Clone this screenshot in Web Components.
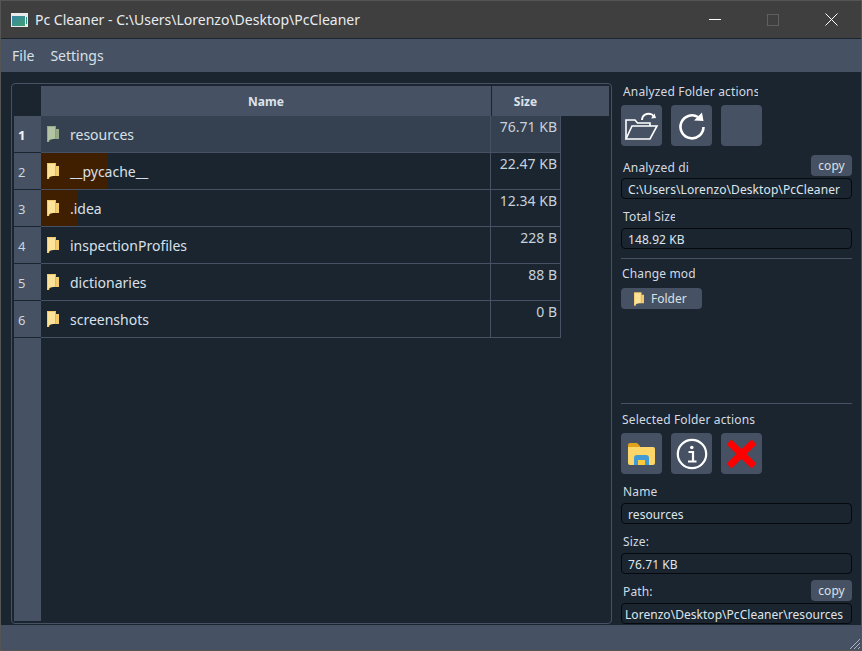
<!DOCTYPE html>
<html lang="en">
<head>
<meta charset="utf-8">
<title>Pc Cleaner</title>
<style>
  html, body { margin: 0; height: 100%; background: #1a2530; }
  body { font: 14px "Noto Sans", sans-serif; color: #d9e0e8; overflow: hidden; }
</style>
</head>
<body>
<pc-app></pc-app>

<script>
// ---------------------------------------------------------------------------
// Helpers
// ---------------------------------------------------------------------------

const define = (tag, markup) => {
  const template = document.createElement('template');
  template.innerHTML = markup;
  customElements.define(tag, class extends HTMLElement {
    constructor() {
      super();
      this.attachShadow({ mode: 'open' }).append(template.content.cloneNode(true));
    }
  });
};

const folderSvg = (light, mid, dark) => `
  <svg width="100%" height="100%" viewBox="0 0 12 16" style="display:block">
    <path d="M0 0 H9 V3 H12 V13 H3 L2 16 H0 Z" fill="${mid}"/>
    <path d="M1 1 H8 V12.500 L2 14 L1 15 Z" fill="${light}"/>
    <path d="M8.500 1 H9 V13 H8.500 Z" fill="${dark}"/>
  </svg>`;

// ---------------------------------------------------------------------------
// Small pieces
// ---------------------------------------------------------------------------

define('pc-icon-button', `
  <style>
    :host { display: flex; align-items: center; justify-content: center;
            width: 41px; height: 41px; background: #465263; border-radius: 4px; }
  </style>
  <slot></slot>`);

define('pc-copy-button', `
  <style>
    :host { display: flex; align-items: center; justify-content: center;
            width: 41px; height: 21px; background: #465263; border-radius: 4px;
            font-size: 12px; color: #d9e0e8; }
  </style>
  <slot></slot>`);

define('pc-value', `
  <style>
    :host { display: flex; align-items: center; box-sizing: border-box; height: 21px;
            padding: 2px 6px 0; background: #1a2530; border: 1px solid #05080c; border-radius: 4px;
            font-size: 12px; letter-spacing: .09px; color: #dfe5ec; white-space: nowrap; overflow: hidden; }
  </style>
  <slot></slot>`);

define('pc-label', `
  <style>
    :host { display: block; height: 16px; line-height: 18px; font-size: 12px; letter-spacing: .15px;
            padding-left: 2px; color: #d3dae2; white-space: nowrap; overflow: hidden; }
  </style>
  <slot></slot>`);

define('pc-rule', `
  <style>
    :host { display: block; height: 1px; background: #465263; }
  </style>`);

// ---------------------------------------------------------------------------
// Window chrome
// ---------------------------------------------------------------------------

define('pc-titlebar', `
  <style>
    :host { display: flex; align-items: center; height: 37px; background: #3f3f3f;
            border-bottom: 1px solid #1a2530; }
    .icon { margin-left: 10px; width: 17px; height: 14px; }
    .title { margin-left: 7px; font-size: 14px; color: #e8ecf0; white-space: nowrap; flex: 1; }
    .control { width: 58px; height: 37px; display: flex; align-items: center; justify-content: center; }
    .control:last-child { width: 59px; }
    .controls { display: flex; }
  </style>
  <svg class="icon" viewBox="0 0 17 14">
    <defs><linearGradient id="g" x1="0" y1="0" x2="1" y2="1">
      <stop offset="0" stop-color="#3a86a8"/><stop offset="1" stop-color="#3f9f70"/>
    </linearGradient></defs>
    <rect width="17" height="14" fill="#e8ecec"/>
    <rect x="1" y="3" width="13" height="10" fill="url(#g)"/>
    <rect x="15" y="4" width="1" height="7" fill="#2f8f8a"/>
  </svg>
  <span class="title">Pc Cleaner - C:\\Users\\Lorenzo\\Desktop\\PcCleaner</span>
  <div class="controls">
    <div class="control"><svg width="12" height="12"><rect y="5" width="12" height="1" fill="#fff"/></svg></div>
    <div class="control"><svg width="12" height="12"><rect x=".5" y=".5" width="11" height="11" fill="none" stroke="#5f5f5f"/></svg></div>
    <div class="control"><svg width="13" height="13"><path d="M.5 .5 L12.5 12.5 M12.5 .5 L.5 12.5" stroke="#fff" fill="none"/></svg></div>
  </div>`);

define('pc-menubar', `
  <style>
    :host { display: flex; align-items: center; gap: 16px; height: 33px; padding-left: 11px;
            background: #465263; font-size: 14px; color: #d9e0e8; }
  </style>
  <span>File</span><span>Settings</span>`);

define('pc-statusbar', `
  <style>
    :host { display: flex; justify-content: flex-end; align-items: flex-end; height: 25px; background: #465263; }
    svg { display: block; }
  </style>
  <svg width="12" height="12"><path d="M1 11 L11 1 M5 11 L11 5 M9 11 L11 9" stroke="#aab2bb" fill="none"/></svg>`);

// ---------------------------------------------------------------------------
// Table
// ---------------------------------------------------------------------------

define('pc-row', `
  <style>
    :host { display: flex; height: 37px; box-sizing: border-box; }
    :host([selected]) { --cell-bg: #354050; --num-weight: 700; --num-color: #f0f3f6; }
    .num { width: 27px; box-sizing: border-box; padding: 2px 0 0 4px; background: #465263;
           border-bottom: 1px solid #1a2530; display: flex; align-items: center;
           font-size: 13px; font-weight: var(--num-weight, 400); color: var(--num-color, #cdd5de); }
    .name { width: 450px; box-sizing: border-box; display: flex; align-items: center; gap: 11px; padding: 0 0 0 6px;
            border-bottom: 1px solid #465263; border-right: 1px solid #465263;
            background: var(--heat, none) 0 0 / var(--heat-width, 0) 100% no-repeat, var(--cell-bg, transparent);
            font-size: 14px; color: #d9e0e8; }
    .size { width: 70px; box-sizing: border-box; padding: 0 3px 0 0; text-align: right; line-height: 21px;
            border-bottom: 1px solid #465263; border-right: 1px solid #465263;
            background: var(--cell-bg, transparent); font-size: 14px; color: #c8d1db; }
  </style>
  <div class="num"><slot name="num"></slot></div>
  <div class="name"><slot name="icon"></slot><slot name="name"></slot></div>
  <div class="size"><slot name="size"></slot></div>`);

define('pc-folder', `
  <style>:host { display: block; width: 12px; height: 16px; }</style>
  ${folderSvg('#fde39a', '#f3ca6c', '#d9a640')}`);

define('pc-folder-selected', `
  <style>:host { display: block; width: 12px; height: 16px; }</style>
  ${folderSvg('#b3c4a4', '#97aa88', '#7f9270')}`);

define('pc-table', `
  <style>
    :host { display: flex; flex-direction: column; box-sizing: border-box; width: 601px; height: 541px;
            padding: 2px; border: 1px solid #465263; border-radius: 4px; }
    .head { display: flex; height: 30px; margin-left: 27px; background: #465263;
            font-size: 12px; font-weight: 700; color: #dde3ea; }
    .head div { display: flex; align-items: center; justify-content: center; }
    .h-name { width: 451px; box-sizing: border-box; border-right: 1px solid #1a2530; }
    .h-size { padding-right: 50px; flex: 1; }
    .filler { flex: 1; width: 27px; background: #465263; }
  </style>
  <div class="head"><div class="h-name">Name</div><div class="h-size">Size</div></div>
  <slot></slot>
  <div class="filler"></div>`);

// ---------------------------------------------------------------------------
// Side panel
// ---------------------------------------------------------------------------

define('pc-side-panel', `
  <style>
    :host { display: flex; flex-direction: column; width: 231px; height: 541px; font-size: 12px; }
    .actions { display: flex; gap: 9px; }
    .line { display: flex; justify-content: space-between; align-items: flex-end; }
    .clip-1 { width: 135px; }
    .clip-2 { width: 66px; }
    .clip-3 { width: 52px; }
    .clip-4 { width: 73px; }
    .folder-btn { display: flex; align-items: center; gap: 7px; box-sizing: border-box; padding-left: 13px;
                  width: 81px; height: 21px; background: #465263; border-radius: 4px; color: #d9e0e8; }
    .spacer { flex: 1; }
    pc-value.path { padding-left: 3px; letter-spacing: .04px; }
  </style>
  <pc-label class="clip-1" style="margin-bottom:6px">Analyzed Folder actions</pc-label>
  <div class="actions">
    <pc-icon-button>
      <svg width="36" height="30" viewBox="0 0 36 30" fill="none" stroke="#fff" stroke-width="1.6">
        <path d="M2 28 V9 H11 L13.5 12 H26 V15"/>
        <path d="M2 28 L8 15 H33 L26 28 Z"/>
        <path d="M18 9 C18 4 23 1.500 28 3.500 L30 6" stroke-width="1.8"/>
        <path d="M27 7.500 L32 7 L30.500 2.500 Z" fill="#fff" stroke="none"/>
      </svg>
    </pc-icon-button>
    <pc-icon-button>
      <svg width="28" height="28" viewBox="0 0 28 28" fill="none" stroke="#fff" stroke-width="2.6">
        <path d="M20 5 A11.500 11.500 0 1 0 25.500 15"/>
        <path d="M16 8.500 L25.500 9 L24 0.500 Z" fill="#fff" stroke="none"/>
      </svg>
    </pc-icon-button>
    <pc-icon-button></pc-icon-button>
  </div>
  <div class="line" style="margin-top:9px">
    <pc-label class="clip-2" style="margin-bottom:1px">Analyzed directory</pc-label>
    <pc-copy-button>copy</pc-copy-button>
  </div>
  <pc-value style="margin-top:2px">C:\\Users\\Lorenzo\\Desktop\\PcCleaner</pc-value>
  <pc-label class="clip-3" style="margin-top:9px;margin-bottom:4px">Total Size:</pc-label>
  <pc-value>148.92 KB</pc-value>
  <pc-rule style="margin-top:9px"></pc-rule>
  <pc-label class="clip-4" style="margin-top:6px;margin-bottom:7px;padding-left:1px">Change mode:</pc-label>
  <div class="folder-btn"><pc-folder style="width:10px;height:14px"></pc-folder><span>Folder</span></div>
  <div class="spacer"></div>
  <pc-rule></pc-rule>
  <pc-label style="margin-top:7px;margin-bottom:6px;padding-left:1px">Selected Folder actions</pc-label>
  <div class="actions">
    <pc-icon-button>
      <svg width="27" height="22" viewBox="0 0 27 22">
        <path d="M0 2 Q0 0 2 0 H9 L12 3 V5 H0 Z" fill="#e2a11a"/>
        <path d="M0 4 H25 Q27 4 27 6 V20 Q27 22 25 22 H2 Q0 22 0 20 Z" fill="#fcd669"/>
        <path d="M6 22 V15 Q6 12 9 12 H18 Q21 12 21 15 V22 H17 V17 H10 V22 Z" fill="#3f9ad6"/>
        <rect x="10" y="17" width="7" height="5" fill="#fcc83c"/>
      </svg>
    </pc-icon-button>
    <pc-icon-button>
      <svg width="32" height="32" viewBox="0 0 32 32" fill="none" stroke="#fff">
        <circle cx="16" cy="16" r="14.200" stroke-width="2.200"/>
        <circle cx="15.800" cy="9.500" r="1.800" fill="#fff" stroke="none"/>
        <path d="M12.500 14 H17 V23 M12 23.500 H20.500" stroke-width="2.200"/>
      </svg>
    </pc-icon-button>
    <pc-icon-button>
      <svg width="31" height="30" viewBox="0 0 31 30">
        <path d="M3 3 L28 27 M28 3 L3 27" stroke="#ff0000" stroke-width="7" fill="none"/>
      </svg>
    </pc-icon-button>
  </div>
  <pc-label style="margin-top:9px;margin-bottom:4px">Name</pc-label>
  <pc-value>resources</pc-value>
  <pc-label style="margin-top:9px;margin-bottom:4px">Size:</pc-label>
  <pc-value>76.71 KB</pc-value>
  <div class="line" style="margin-top:6px">
    <pc-label style="width:40px;margin-bottom:2px">Path:</pc-label>
    <pc-copy-button>copy</pc-copy-button>
  </div>
  <pc-value class="path" style="margin-top:2px">Lorenzo\\Desktop\\PcCleaner\\resources</pc-value>`);

// ---------------------------------------------------------------------------
// Page
// ---------------------------------------------------------------------------

define('pc-app', `
  <style>
    :host { display: flex; flex-direction: column; box-sizing: border-box; width: 862px; height: 651px;
            background: #1a2530; border: 1px solid #555; }
    main { flex: 1; display: flex; gap: 9px; padding: 11px 9px 0 10px; }
  </style>
  <pc-titlebar></pc-titlebar>
  <pc-menubar></pc-menubar>
  <main>
    <pc-table>
      <pc-row selected>
        <span slot="num">1</span><pc-folder-selected slot="icon"></pc-folder-selected>
        <span slot="name">resources</span><span slot="size">76.71 KB</span>
      </pc-row>
      <pc-row style="--heat:linear-gradient(#401e00,#401e00);--heat-width:67px">
        <span slot="num">2</span><pc-folder slot="icon"></pc-folder>
        <span slot="name">__pycache__</span><span slot="size">22.47 KB</span>
      </pc-row>
      <pc-row style="--heat:linear-gradient(#401e00,#401e00);--heat-width:37px">
        <span slot="num">3</span><pc-folder slot="icon"></pc-folder>
        <span slot="name">.idea</span><span slot="size">12.34 KB</span>
      </pc-row>
      <pc-row>
        <span slot="num">4</span><pc-folder slot="icon"></pc-folder>
        <span slot="name">inspectionProfiles</span><span slot="size">228 B</span>
      </pc-row>
      <pc-row>
        <span slot="num">5</span><pc-folder slot="icon"></pc-folder>
        <span slot="name">dictionaries</span><span slot="size">88 B</span>
      </pc-row>
      <pc-row>
        <span slot="num">6</span><pc-folder slot="icon"></pc-folder>
        <span slot="name">screenshots</span><span slot="size">0 B</span>
      </pc-row>
    </pc-table>
    <pc-side-panel></pc-side-panel>
  </main>
  <pc-statusbar></pc-statusbar>`);
</script>
</body>
</html>
